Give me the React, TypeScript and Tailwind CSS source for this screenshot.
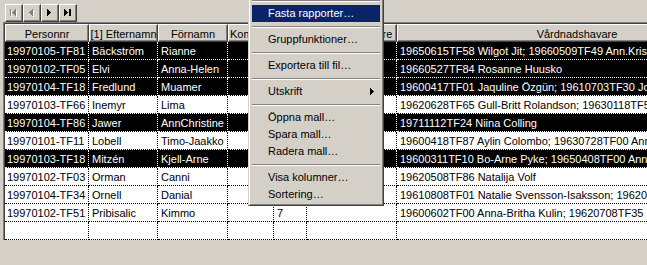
import React from 'react';

const WIDTHS = ['w-[84px]', 'w-[69px]', 'w-[70px]', 'w-[46px]', 'w-[33px]', 'w-[90px]', 'w-[360px]'];

type Row = { sel: boolean; cells: string[] };

const ROWS: Row[] = [
  { sel: true, cells: ['19970105-TF81', 'Bäckström', 'Rianne', '', '', '', '19650615TF58 Wilgot Jit; 19660509TF49 Ann.Kristin Jit'] },
  { sel: true, cells: ['19970102-TF05', 'Elvi', 'Anna-Helen', '', '', '', '19660527TF84 Rosanne Huusko'] },
  { sel: true, cells: ['19970104-TF18', 'Fredlund', 'Muamer', '', '', '', '19600417TF01 Jaquline Özgün; 19610703TF30 Jouni Fredlund'] },
  { sel: false, cells: ['19970103-TF66', 'Inemyr', 'Lima', '', '', '', '19620628TF65 Gull-Britt Rolandson; 19630118TF52 Per Inemyr'] },
  { sel: true, cells: ['19970104-TF86', 'Jawer', 'AnnChristine', '', '', '', '19711112TF24 Niina Colling'] },
  { sel: false, cells: ['19970101-TF11', 'Lobell', 'Timo-Jaakko', '', '', '', '19600418TF87 Aylin Colombo; 19630728TF00 Anneli Lobell'] },
  { sel: true, cells: ['19970103-TF18', 'Mitzén', 'Kjell-Arne', '', '', '', '19600311TF10 Bo-Arne Pyke; 19650408TF00 AnnBritt Mitzén'] },
  { sel: false, cells: ['19970102-TF03', 'Orman', 'Canni', '', '', '', '19620508TF86 Natalija Volf'] },
  { sel: false, cells: ['19970104-TF34', 'Ornell', 'Danial', '', '', '', '19610808TF01 Natalie Svensson-Isaksson; 19620201TF11 Ornell'] },
  { sel: false, cells: ['19970102-TF51', 'Pribisalic', 'Kimmo', '', '7', '', '19600602TF00 Anna-Britha Kulin; 19620708TF35 Mirza Pribisalic'] },
  { sel: false, cells: ['', '', '', '', '', '', ''] },
];

// headers hidden under the popup menu are left blank
const HEADERS = ['Personnr', '[1] Efternamn', 'Förnamn', 'Kommentar', '', 'Vårdnadshavare', 'Vårdnadshavare'];

function Tri({ dir, color }: { dir: 'l' | 'r'; color: string }) {
  const hs = [1, 2, 3, 4, 3, 2, 1];
  return (
    <>
      {hs.map((w, i) => (
        <rect key={i} x={dir === 'r' ? 0 : 4 - w} y={i} width={w} height={1} fill={color} />
      ))}
    </>
  );
}

function NavIcon({ kind }: { kind: 'first' | 'prev' | 'next' | 'last' }) {
  const off = kind === 'first' || kind === 'prev';
  const c = off ? '#808080' : '#000';
  const draw = (color: string, dx: number, dy: number) => (
    <g transform={`translate(${dx},${dy})`}>
      {kind === 'first' && (
        <>
          <rect x={0} y={0} width={1} height={7} fill={color} />
          <g transform="translate(2,0)">
            <Tri dir="l" color={color} />
          </g>
        </>
      )}
      {kind === 'prev' && (
        <g transform="translate(1,0)">
          <Tri dir="l" color={color} />
        </g>
      )}
      {kind === 'next' && (
        <g transform="translate(1,0)">
          <Tri dir="r" color={color} />
        </g>
      )}
      {kind === 'last' && (
        <>
          <Tri dir="r" color={color} />
          <rect x={5} y={0} width={2} height={7} fill={color} />
        </>
      )}
    </g>
  );
  return (
    <svg width="8" height="8" viewBox="0 0 8 8" shapeRendering="crispEdges">
      {off && draw('#fff', 1, 1)}
      {draw(c, 0, 0)}
    </svg>
  );
}

function MenuSep() {
  return (
    <div className="h-[9px] pt-[4px]">
      <div className="h-px bg-[#808080]" />
      <div className="h-px bg-white" />
    </div>
  );
}

function MenuItem({ label, active, sub }: { label: string; active?: boolean; sub?: boolean }) {
  return (
    <div
      className={`flex h-[17px] items-center justify-between pl-[16px] pr-[6px] leading-[17px] whitespace-nowrap ${
        active ? 'bg-[#0a246a] text-white' : 'text-black'
      }`}
    >
      <span>{label}</span>
      {sub && (
        <svg width="4" height="7" viewBox="0 0 4 7" shapeRendering="crispEdges">
          <Tri dir="r" color="#000" />
        </svg>
      )}
    </div>
  );
}

export default function App() {
  return (
    <div className="relative h-[265px] w-[647px] overflow-hidden bg-[#d4d0c8] font-['Liberation_Sans',Arial,sans-serif] text-[11px] text-black">
      <div className="flex h-[22px] pl-[5px] pt-[4px]">
        {(['first', 'prev', 'next', 'last'] as const).map((k) => (
          <div
            key={k}
            className="flex h-[18px] w-[18px] items-center justify-center border border-t-white border-l-white border-r-[#404040] border-b-[#404040] shadow-[inset_-1px_-1px_0_#808080]"
          >
            <NavIcon kind={k} />
          </div>
        ))}
      </div>

      <div className="ml-[3px] border-t border-l border-[#808080]">
        <div className="border-t border-l border-[#404040]">
          <div className="flex h-[18px] bg-[#d4d0c8]">
            {HEADERS.map((h, i) => (
              <div
                key={i}
                className={`${WIDTHS[i]} flex h-full shrink-0 overflow-hidden whitespace-nowrap border-t border-l border-t-white border-l-white border-r border-b border-r-[#404040] border-b-[#404040] pt-[3px] leading-[13px] shadow-[inset_-1px_-1px_0_#808080] ${
                  i === 3 ? 'justify-start pl-[1px]' : 'justify-center'
                }`}
              >
                {h}
              </div>
            ))}
          </div>
          {ROWS.map((r, ri) => (
            <div key={ri} className={`flex h-[18px] ${r.sel ? 'bg-black text-white' : 'bg-white text-black'}`}>
              {r.cells.map((c, ci) => (
                <div
                  key={ci}
                  className={`${WIDTHS[ci]} h-full shrink-0 overflow-hidden whitespace-nowrap border-r border-b border-dotted pt-[3px] leading-[13px] ${
                    r.sel ? 'border-white' : 'border-black'
                  } ${ci === 0 ? 'pl-[2px]' : 'pl-[3px]'}`}
                >
                  {c}
                </div>
              ))}
            </div>
          ))}
        </div>
      </div>

      <div className="absolute left-[248px] top-[-8px] w-[136px] border border-t-[#d4d0c8] border-l-[#d4d0c8] border-r-[#404040] border-b-[#404040] bg-[#d4d0c8] px-[3px] pt-[3px] pb-[2px] shadow-[inset_1px_1px_0_#fff,inset_-1px_-1px_0_#808080]">
        <MenuSep />
        <MenuItem label="Fasta rapporter…" active />
        <MenuSep />
        <MenuItem label="Gruppfunktioner…" />
        <MenuSep />
        <MenuItem label="Exportera till fil…" />
        <MenuSep />
        <MenuItem label="Utskrift" sub />
        <MenuSep />
        <MenuItem label="Öppna mall…" />
        <MenuItem label="Spara mall…" />
        <MenuItem label="Radera mall…" />
        <MenuSep />
        <MenuItem label="Visa kolumner…" />
        <MenuItem label="Sortering…" />
      </div>
    </div>
  );
}
